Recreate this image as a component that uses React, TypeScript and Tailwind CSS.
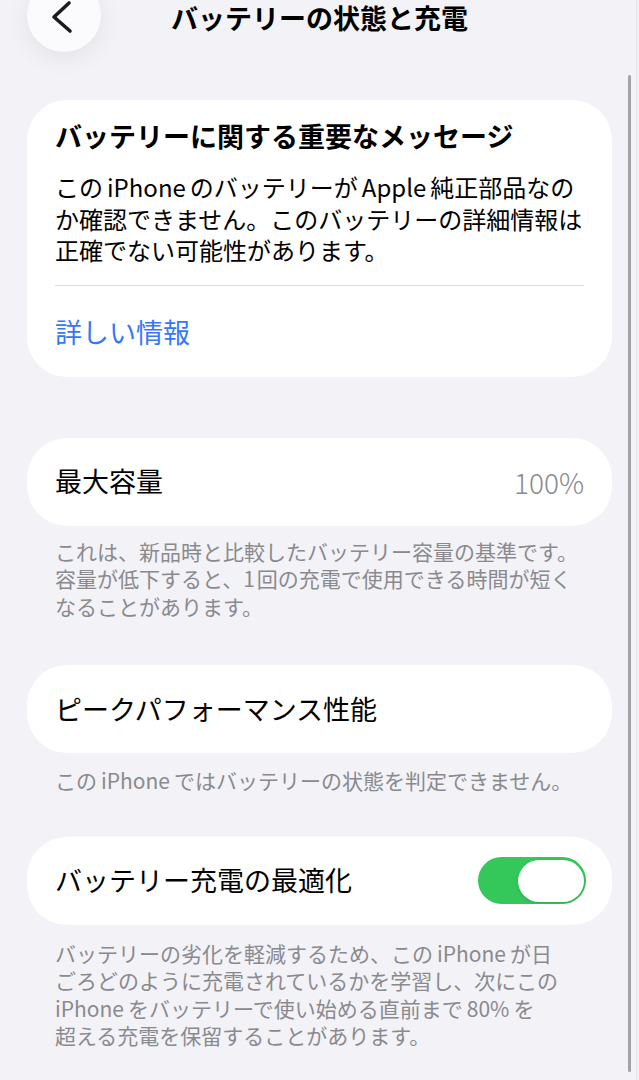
import React, { useState } from 'react';

const font = { fontFamily: '"Noto Sans CJK JP", "Noto Sans", sans-serif' };

// Latin words get a little air around them, like iOS does in Japanese text
const L: React.FC<{ children: React.ReactNode }> = ({ children }) => <span className="mx-[4px]">{children}</span>;

const Footer: React.FC<{ lines: React.ReactNode[]; className?: string }> = ({ lines, className }) => (
  <div className={`px-[28px] text-[21px] leading-[27.5px] text-[#8a8a8e] ${className ?? ''}`}>
    {lines.map((l, i) => (
      <div key={i} className="whitespace-nowrap">
        {l}
      </div>
    ))}
  </div>
);

const Toggle: React.FC<{ on: boolean; onClick: () => void }> = ({ on, onClick }) => (
  <button
    onClick={onClick}
    className={`flex h-[47px] w-[108px] items-center rounded-full p-[2.5px] ${on ? 'justify-end bg-[#34c759]' : 'justify-start bg-[#e5e5ea]'}`}
  >
    <span className="h-[42px] w-[66px] rounded-full bg-white shadow-[0_1px_3px_rgba(0,0,0,0.15)]" />
  </button>
);

export default function App() {
  const [optimized, setOptimized] = useState(true);

  return (
    <div className="relative min-h-[1080px] overflow-hidden bg-[#f2f2f7] text-black" style={font}>
      {/* Nav bar */}
      <div className="relative h-[100px] pt-[1px]">
        <div className="text-center text-[27px] font-semibold leading-[34px]">バッテリーの状態と充電</div>
        <button className="absolute left-[27px] top-[-22px] flex h-[74px] w-[74px] items-center justify-center rounded-full bg-[#fbfbfd] shadow-[0_6px_24px_rgba(0,0,0,0.07)]">
          <svg width="74" height="74" viewBox="0 0 74 74" fill="none">
            <path d="M42 25 L27 39 L43 53" stroke="#1c1c1e" strokeWidth="3.6" strokeLinecap="round" strokeLinejoin="round" />
          </svg>
        </button>
      </div>

      <div className="px-[27px]">
        {/* Important message card */}
        <div className="rounded-[40px] bg-white px-[28px] pb-[27px] pt-[18px]">
          <div className="whitespace-nowrap text-[27px] font-bold leading-[36px]">バッテリーに関する重要なメッセージ</div>
          <div className="mt-[17px] text-[24px] leading-[31.5px]">
            <div className="whitespace-nowrap">
              この<L>iPhone</L>のバッテリーが<L>Apple</L>純正部品なの
            </div>
            <div className="whitespace-nowrap">か確認できません。このバッテリーの詳細情報は</div>
            <div className="whitespace-nowrap">正確でない可能性があります。</div>
          </div>
          <div className="mt-[19px] h-px bg-[#dedee2]" />
          <div className="mt-[28px] text-[27px] leading-[36px] text-[#3478f6]">詳しい情報</div>
        </div>

        {/* Maximum capacity */}
        <div className="mt-[61px] flex h-[88px] items-center justify-between rounded-[40px] bg-white px-[28px]">
          <span className="text-[27px]">最大容量</span>
          <span className="text-[28px] font-light text-[#8a8a8e]">100%</span>
        </div>
      </div>
      <Footer
        className="ml-[27px] mt-[12px]"
        lines={[
          'これは、新品時と比較したバッテリー容量の基準です。',
          <>
            容量が低下すると、<span className="mr-[2px]">1</span>回の充電で使用できる時間が短く
          </>,
          'なることがあります。',
        ]}
      />

      <div className="px-[27px]">
        <div className="mt-[45px] flex h-[88px] items-center rounded-[40px] bg-white px-[28px]">
          <span className="text-[27px]">ピークパフォーマンス性能</span>
        </div>
      </div>
      <Footer
        className="ml-[27px] mt-[14px]"
        lines={[
          <>
            この<L>iPhone</L>ではバッテリーの状態を判定できません。
          </>,
        ]}
      />

      <div className="px-[27px]">
        <div className="mt-[42px] flex h-[88px] items-center justify-between rounded-[40px] bg-white pl-[28px] pr-[26px]">
          <span className="text-[27px]">バッテリー充電の最適化</span>
          <Toggle on={optimized} onClick={() => setOptimized(!optimized)} />
        </div>
      </div>
      <Footer
        className="ml-[27px] mt-[15px]"
        lines={[
          <>
            バッテリーの劣化を軽減するため、この<L>iPhone</L>が日
          </>,
          'ごろどのように充電されているかを学習し、次にこの',
          <>
            <span className="mr-[4px]">iPhone</span>をバッテリーで使い始める直前まで<L>80%</L>を
          </>,
          '超える充電を保留することがあります。',
        ]}
      />

      {/* scroll indicator */}
      <div className="absolute right-[8px] top-[75px] h-[997px] w-[3px] rounded-full bg-[#a3a3a8]" />
      <div className="absolute right-[2px] top-0 h-full w-px bg-[#e2e2e6]" />
    </div>
  );
}
